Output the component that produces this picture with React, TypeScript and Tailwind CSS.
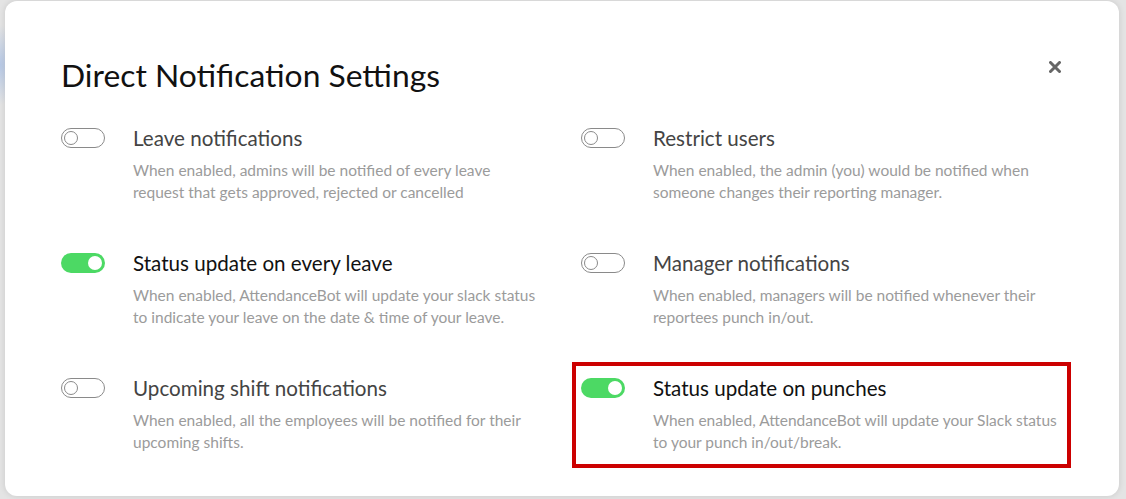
import React from "react";

type Item = { title: string; lines: string[]; on: boolean; highlight?: boolean };

const items: Item[] = [
  { title: "Leave notifications", lines: ["When enabled, admins will be notified of every leave", "request that gets approved, rejected or cancelled"], on: false },
  { title: "Restrict users", lines: ["When enabled, the admin (you) would be notified when", "someone changes their reporting manager."], on: false },
  { title: "Status update on every leave", lines: ["When enabled, AttendanceBot will update your slack status", "to indicate your leave on the date & time of your leave."], on: true },
  { title: "Manager notifications", lines: ["When enabled, managers will be notified whenever their", "reportees punch in/out."], on: false },
  { title: "Upcoming shift notifications", lines: ["When enabled, all the employees will be notified for their", "upcoming shifts."], on: false },
  { title: "Status update on punches", lines: ["When enabled, AttendanceBot will update your Slack status", "to your punch in/out/break."], on: true, highlight: true },
];

function Toggle({ on }: { on: boolean }) {
  return on ? (
    <div className="mt-[2px] flex h-[20px] w-[44px] shrink-0 items-center justify-end rounded-full bg-[#4cd964] pr-[3px]">
      <div className="h-[14px] w-[14px] rounded-full bg-white" />
    </div>
  ) : (
    <div className="mt-[2px] flex h-[20px] w-[44px] shrink-0 items-center rounded-full border border-[#8a8a8a] bg-white pl-[2px]">
      <div className="h-[14px] w-[14px] rounded-full border border-[#8a8a8a] bg-white" />
    </div>
  );
}

function Row({ item }: { item: Item }) {
  const body = (
    <div className="flex gap-[28px]">
      <Toggle on={item.on} />
      <div>
        <div className={`whitespace-nowrap text-[20.6px] leading-[24px] ${item.on ? "text-[#111]" : "text-[#444]"}`}>{item.title}</div>
        <div className="mt-[9px] whitespace-nowrap text-[15.5px] leading-[22px] text-[#9b9b9b]">
          {item.lines.map((l, i) => (
            <div key={i}>{l}</div>
          ))}
        </div>
      </div>
    </div>
  );
  if (item.highlight) {
    return (
      <div className="h-[125px]">
        <div className="-ml-[9px] -mt-[14px] h-[106px] w-[499px] border-4 border-[#cc0000] pl-[5px] pt-[10px]">{body}</div>
      </div>
    );
  }
  return <div className="h-[125px]">{body}</div>;
}

export default function App() {
  return (
    <div
      className="h-[499px] w-[1126px] overflow-hidden bg-[#e4e4e4] pl-[5px] pt-[1px]"
      style={{ fontFamily: "Lato, 'Noto Sans', sans-serif", backgroundImage: "radial-gradient(ellipse 20px 40px at 0px 65px, #b7c9e6, transparent)" }}
    >
      <div className="relative h-[495px] w-[1114px] rounded-[12px] bg-white pl-[56px] pt-[54px] shadow-[0_0_6px_rgba(0,0,0,0.12)]">
        <div className="flex items-start justify-between pr-[58px]">
          <h1 className="text-[31.8px] leading-[40px] text-[#111]">Direct Notification Settings</h1>
          <svg width="12" height="12" viewBox="0 0 12 12" className="mt-[6px]">
            <path d="M1.5 1.5 L10.5 10.5 M10.5 1.5 L1.5 10.5" stroke="#666" strokeWidth="3" strokeLinecap="round" />
          </svg>
        </div>
        <div className="mt-[31px] grid grid-cols-[520px_520px]">
          {items.map((it) => (
            <Row key={it.title} item={it} />
          ))}
        </div>
      </div>
    </div>
  );
}
